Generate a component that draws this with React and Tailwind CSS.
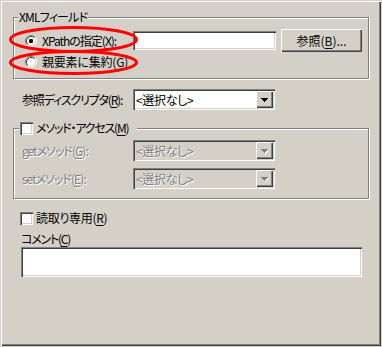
const sunken =
  "shadow-[inset_1px_1px_0_#808080,inset_2px_2px_0_#404040,inset_-1px_-1px_0_#ffffff,inset_-2px_-2px_0_#d4d0c8]";
const raised =
  "shadow-[inset_1px_1px_0_#ffffff,inset_-1px_-1px_0_#404040,inset_-2px_-2px_0_#808080]";
const etched = "border border-[#808080] shadow-[inset_1px_1px_0_#ffffff,1px_1px_0_#ffffff]";

function U({ children }) {
  return <span className="underline underline-offset-2">{children}</span>;
}

function Radio({ checked }) {
  return (
    <svg width="12" height="12" viewBox="0 0 12 12" className="shrink-0">
      <circle cx="6" cy="6" r="5" fill="#fff" />
      <path d="M2.11 9.89A5.5 5.5 0 0 1 9.89 2.11" fill="none" stroke="#808080" />
      <path d="M9.89 2.11A5.5 5.5 0 0 1 2.11 9.89" fill="none" stroke="#fff" />
      <path d="M2.82 9.18A4.5 4.5 0 0 1 9.18 2.82" fill="none" stroke="#404040" />
      <path d="M9.18 2.82A4.5 4.5 0 0 1 2.82 9.18" fill="none" stroke="#d4d0c8" />
      {checked && <rect x="4" y="4" width="4" height="4" rx="1.2" fill="#000" />}
    </svg>
  );
}

function Checkbox() {
  return <div className={`h-[13px] w-[13px] shrink-0 bg-white ${sunken}`} />;
}

function Arrow({ disabled }) {
  const d = "M0 0h7v1H0zM1 1h5v1H1zM2 2h3v1H2zM3 3h1v1H3z";
  return (
    <svg width="8" height="5" viewBox="0 0 8 5">
      {disabled && <path d={d} fill="#fff" transform="translate(1 1)" />}
      <path d={d} fill={disabled ? "#808080" : "#000"} />
    </svg>
  );
}

function Select({ disabled }) {
  return (
    <div
      className={`flex h-[21px] w-[142px] shrink-0 items-center p-[2px] ${
        disabled ? "bg-[#d4d0c8]" : "bg-white"
      } ${sunken}`}
    >
      <span
        className={`flex-1 pl-[1px] tracking-[-0.3px] ${
          disabled ? "text-[#808080] [text-shadow:1px_1px_0_#fff]" : "text-black"
        }`}
      >
        &lt;選択なし&gt;
      </span>
      <div className={`flex h-[17px] w-[17px] items-center justify-center bg-[#d4d0c8] pl-[1px] pt-[1px] ${raised}`}>
        <Arrow disabled={disabled} />
      </div>
    </div>
  );
}

export default function App() {
  return (
    <div className="h-[347px] w-[382px] whitespace-nowrap bg-[#d4d0c8] font-['Noto_Sans_CJK_JP',sans-serif] text-[12px] leading-[14px] text-black [font-feature-settings:'palt']">
      <div className="relative h-[346px] w-[381px] pl-[13px] pt-[17px] shadow-[inset_1px_1px_0_#d4d0c8,inset_2px_2px_0_#ffffff,inset_-1px_-1px_0_#404040,inset_-2px_-2px_0_#808080]">
        {/* XMLフィールド */}
        <div className={`relative h-[62px] w-[356px] pl-[11px] pt-[11px] ${etched}`}>
          <span className="absolute -top-[8px] left-[4px] bg-[#d4d0c8] px-[1px] tracking-[-0.8px]">XMLフィールド</span>
          <div className="flex h-[23px] items-center">
            <div className="flex w-[108px] items-center gap-[5px]">
              <Radio checked />
              <span className="tracking-[-1px]">
                XPathの指定(<U>X</U>):
              </span>
            </div>
            <div className={`h-[19px] w-[143px] bg-white ${sunken}`} />
            <button className={`ml-[5px] flex h-[23px] w-[81px] items-center justify-center bg-[#d4d0c8] ${raised}`}>
              参照(<U>B</U>)...
            </button>
          </div>
          <div className="mt-[2px] flex h-[16px] items-center gap-[5px]">
            <Radio />
            <span className="tracking-[-0.2px]">
              親要素に集約(<U>G</U>)
            </span>
          </div>
        </div>

        {/* 参照ディスクリプタ */}
        <div className="ml-[9px] mt-[10px] flex h-[21px] items-center">
          <span className="w-[111px] tracking-[-1.2px]">
            参照ディスクリプタ(<U>R</U>):
          </span>
          <Select />
        </div>

        {/* メソッド・アクセス */}
        <div className={`relative mt-[18px] h-[71px] w-[356px] pl-[8px] pt-[11px] ${etched}`}>
          <div className="absolute -top-[8px] left-[5px] flex h-[14px] items-center gap-[3px] bg-[#d4d0c8] pl-[1px] pr-[9px]">
            <Checkbox />
            <span className="tracking-[-1.2px]">
              メソッド・アクセス(<U>M</U>)
            </span>
          </div>
          <div className="flex flex-col gap-[7px] text-[#808080] tracking-[-1px] [text-shadow:1px_1px_0_#fff]">
            <div className="flex h-[21px] items-center">
              <span className="w-[111px]">
                getメソッド(<U>G</U>):
              </span>
              <Select disabled />
            </div>
            <div className="flex h-[21px] items-center">
              <span className="w-[111px]">
                setメソッド(<U>E</U>):
              </span>
              <Select disabled />
            </div>
          </div>
        </div>

        {/* 読取り専用 */}
        <div className="ml-[7px] mt-[12px] flex h-[14px] items-center gap-[3px]">
          <Checkbox />
          <span className="tracking-[-0.3px]">
            読取り専用(<U>R</U>)
          </span>
        </div>

        {/* コメント */}
        <div className="ml-[8px] mt-[7px] tracking-[-1.2px]">
          コメント(<U>C</U>)
        </div>
        <div className={`ml-[8px] mt-[1px] h-[30px] w-[341px] bg-white ${sunken}`} />

        {/* annotation ellipses */}
        <svg className="pointer-events-none absolute left-0 top-0" width="382" height="347">
          <ellipse cx="73.5" cy="39.5" rx="63" ry="12" fill="none" stroke="#ff0000" strokeWidth="3" />
          <ellipse cx="73.5" cy="62.5" rx="63" ry="11" fill="none" stroke="#ff0000" strokeWidth="3" />
        </svg>
      </div>
    </div>
  );
}
